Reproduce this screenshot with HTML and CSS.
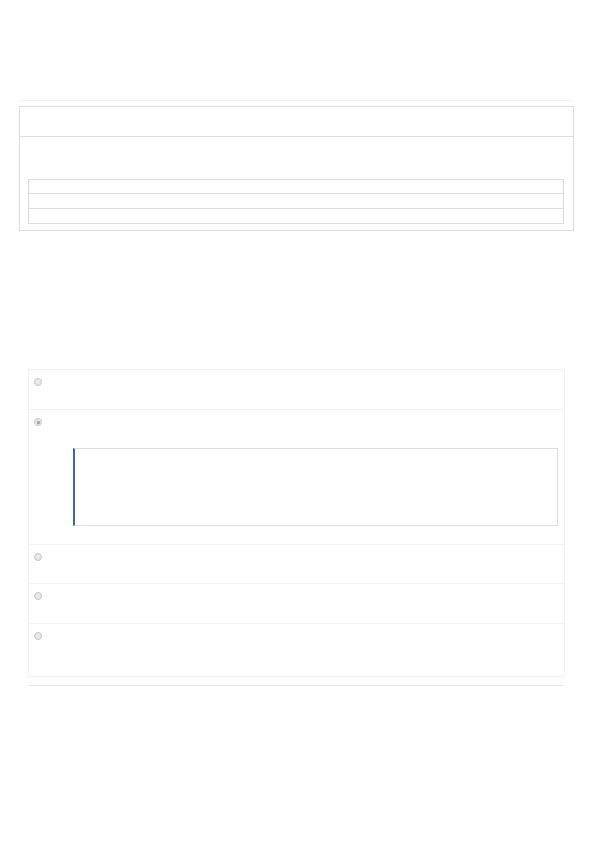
FILE: index.html
```html
<!DOCTYPE html>
<html>
<head>
<meta charset="utf-8">
<title>Form</title>
<link rel="stylesheet" href="styles.css">
</head>
<body>
<div class="page">
  <div class="top-rule"></div>
  <section class="panel">
    <div class="panel-head"></div>
    <div class="panel-body">
      <div class="grid">
        <div class="grid-row r1"></div>
        <div class="grid-row r2"></div>
        <div class="grid-row r3"></div>
      </div>
    </div>
  </section>
  <ul class="options">
    <li class="opt h39"><span class="radio"></span><div class="opt-main"></div></li>
    <li class="opt opt-open"><span class="radio checked"></span><div class="opt-main"><div class="quote"></div></div></li>
    <li class="opt h38"><span class="radio"></span><div class="opt-main"></div></li>
    <li class="opt h39"><span class="radio"></span><div class="opt-main"></div></li>
    <li class="opt h52 last"><span class="radio"></span><div class="opt-main"></div></li>
  </ul>
  <div class="bottom-rule"></div>
</div>
</body>
</html>
```

FILE: styles.css
```css
html, body {
  margin: 0;
  padding: 0;
  background: #ffffff;
  font-family: "Open Sans", "Liberation Sans", sans-serif;
}

.page {
  padding-top: 100px;
  display: flex;
  flex-direction: column;
}

.top-rule {
  margin-left: 19px;
  width: 554px;
  height: 1px;
  background: #f3f3f3;
}

.panel {
  margin: 5px 0 0 19px;
  width: 555px;
  box-sizing: border-box;
  border: 1px solid #dcdcdc;
}

.panel-head {
  height: 29px;
  border-bottom: 1px solid #dcdcdc;
}

.panel-body {
  padding: 42px 9px 6px 8px;
}

.grid {
  border: 1px solid #dcdcdc;
}

.grid-row.r1 { height: 13px; }
.grid-row.r2 { height: 14px; border-top: 1px solid #dcdcdc; }
.grid-row.r3 { height: 14px; border-top: 1px solid #dcdcdc; }

.options {
  list-style: none;
  margin: 138px 0 0 28px;
  padding: 0;
  width: 537px;
  box-sizing: border-box;
  border: 1px solid #f1f1f1;
}

.opt {
  display: flex;
  align-items: flex-start;
  box-sizing: border-box;
  padding: 8px 6px 0 5px;
  border-bottom: 1px solid #f1f1f1;
}

.opt.last { border-bottom: none; }

.opt.h38 { height: 39px; }
.opt.h39 { height: 40px; }
.opt.h52 { height: 52px; }

.opt-open { padding-bottom: 18px; }

.radio {
  flex: none;
  width: 8px;
  height: 8px;
  box-sizing: border-box;
  border-radius: 50%;
  border: 1px solid #c4c4c4;
  background: #e9e9e9;
  display: flex;
  align-items: center;
  justify-content: center;
}

.radio.checked::after {
  content: "";
  width: 3px;
  height: 3px;
  border-radius: 50%;
  background: #9a9a9a;
}

.opt-main {
  flex: 1;
}

.quote {
  margin: 30px 0 0 31px;
  height: 78px;
  box-sizing: border-box;
  border: 1px solid #dcdcdc;
  border-left: 2px solid #3a6aa0;
}

.bottom-rule {
  margin: 8px 0 0 28px;
  width: 536px;
  height: 1px;
  background: #e6e6e6;
}
```
